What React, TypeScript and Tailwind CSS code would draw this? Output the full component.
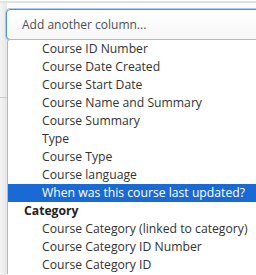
const columns = [
  'Course ID Number',
  'Course Date Created',
  'Course Start Date',
  'Course Name and Summary',
  'Course Summary',
  'Type',
  'Course Type',
  'Course language',
];

const categoryColumns = [
  'Course Category (linked to category)',
  'Course Category ID Number',
  'Course Category ID',
];

const Option = ({ label, selected = false }: { label: string; selected?: boolean }) => (
  <div
    className={`h-[18px] leading-[18px] pl-[34px] whitespace-nowrap ${
      selected ? 'bg-[#1a6ad6] text-white' : 'text-[#333333]'
    }`}
  >
    {label}
  </div>
);

export default function App() {
  return (
    <div
      className="w-[256px] h-[275px] overflow-hidden bg-white relative text-[12.2px]"
      style={{ fontFamily: '"Open Sans", "Noto Sans", sans-serif' }}
    >
      <div className="h-[2px] bg-[#e2e2e2] mt-[1px]" />
      <div className="flex">
        <div className="w-[7px] h-[400px] bg-gradient-to-r from-[#f4f4f4] to-[#e6e6e6] flex flex-col">
          <div className="h-[94px]" />
          <div className="h-px bg-[#cccccc]" />
        </div>
        <div className="flex-1" />
      </div>

      <div className="absolute left-[6px] top-[9px] w-[270px]">
        <div className="h-[31px] border border-[#4f93d6] rounded-[4px] bg-gradient-to-b from-white to-[#f7f7f7] shadow-[0_0_0_1px_#a9cdf0] flex items-center pl-[15px] text-[#495057] text-[12px]">
          Add another column...
        </div>
        <div className="ml-[1px] -mt-px border-l border-t border-[#b8b8b8] rounded-tl-[3px] bg-white">
          {columns.map((c) => (
            <Option key={c} label={c} />
          ))}
          <Option label="When was this course last updated?" selected />
          <div className="h-[18px] leading-[18px] pl-[16px] font-bold text-[#222222]">Category</div>
          {categoryColumns.map((c) => (
            <Option key={c} label={c} />
          ))}
        </div>
      </div>
    </div>
  );
}
